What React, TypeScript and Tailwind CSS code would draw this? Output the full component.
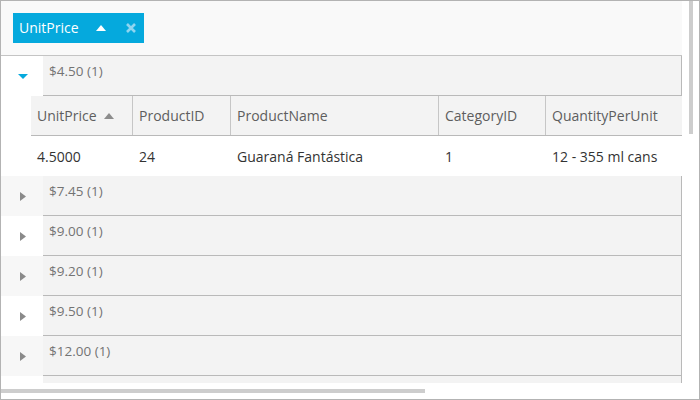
import React from "react";

const cols = [
  { w: "w-[102px]", label: "UnitPrice", sort: true, val: "4.5000" },
  { w: "w-[98px]", label: "ProductID", val: "24" },
  { w: "w-[208px]", label: "ProductName", val: "Guaraná Fantástica" },
  { w: "w-[107px]", label: "CategoryID", val: "1" },
  { w: "w-[160px]", label: "QuantityPerUnit", val: "12 - 355 ml cans" },
];

const groups = ["$7.45 (1)", "$9.00 (1)", "$9.20 (1)", "$9.50 (1)", "$12.00 (1)", ""];

function RightArrow() {
  return (
    <svg width="6" height="9" viewBox="0 0 6 9" className="block">
      <path d="M0 0 L6 4.5 L0 9 Z" fill="#8a8a8a" />
    </svg>
  );
}

function DownArrow({ color }: { color: string }) {
  return (
    <svg width="10" height="5" viewBox="0 0 10 5" className="block">
      <path d="M0 0 L10 0 L5 5 Z" fill={color} />
    </svg>
  );
}

function UpArrow({ color }: { color: string }) {
  return (
    <svg width="10" height="6" viewBox="0 0 10 6" className="block">
      <path d="M0 6 L10 6 L5 0 Z" fill={color} />
    </svg>
  );
}

export default function App() {
  return (
    <div
      className="w-[700px] h-[400px] border border-[#b3b3b3] bg-white flex overflow-hidden"
      style={{ fontFamily: '"Open Sans", "Noto Sans", sans-serif' }}
    >
      <div className="w-[681px] flex flex-col shrink-0">
        {/* grouping panel */}
        <div className="h-[55px] shrink-0 bg-[#f9f9f9] border-b border-[#c4c4c4] pt-[12px] pl-[12px]">
          <div className="w-[131px] h-[30px] bg-[#05a9dd] flex items-center text-white text-[14px]">
            <span className="ml-[6px] leading-none">UnitPrice</span>
            <span className="ml-[17px]">
              <UpArrow color="#ffffff" />
            </span>
            <span className="ml-[20px]">
              <svg width="10" height="10" viewBox="0 0 10 10" className="block">
                <path d="M1 1 L9 9 M9 1 L1 9" stroke="#8fd5f0" strokeWidth="2.6" />
              </svg>
            </span>
          </div>
        </div>
        {/* body */}
        <div className="h-[327px] shrink-0 overflow-hidden">
          {/* group 1 expanded */}
          <div className="flex h-[40px]">
            <div className="w-[42px] shrink-0 bg-white flex items-center justify-center pl-[2px]">
              <DownArrow color="#05a9dd" />
            </div>
            <div className="flex-1 bg-[#f3f3f3] border-b border-r border-[#b9b9b9] pl-[6px] pt-[6px] text-[13.5px] leading-[18px] text-[#737373]">
              $4.50 (1)
            </div>
          </div>
          {/* column header */}
          <div className="flex h-[40px] overflow-hidden">
            <div className="w-[30px] shrink-0 bg-white" />
            <div className="flex flex-1 bg-[#f3f3f3] border-b border-[#b9b9b9] overflow-hidden">
              {cols.map((c, i) => (
                <div
                  key={c.label}
                  className={`${c.w} shrink-0 h-full flex items-center pl-[6px] text-[14px] text-[#5e5e5e] ${
                    i < cols.length - 1 ? "border-r border-[#c6c6c6]" : ""
                  }`}
                >
                  <span>{c.label}</span>
                  {c.sort && (
                    <span className="ml-[7px]">
                      <UpArrow color="#8c8c8c" />
                    </span>
                  )}
                </div>
              ))}
            </div>
          </div>
          {/* data row */}
          <div className="flex h-[40px] overflow-hidden bg-white">
            <div className="w-[30px] shrink-0" />
            {cols.map((c, i) => (
              <div
                key={c.label}
                className={`${c.w} shrink-0 h-full flex items-center pl-[6px] text-[14px] text-[#333333] ${
                  i < cols.length - 1 ? "border-r border-transparent" : ""
                }`}
              >
                {c.val}
              </div>
            ))}
          </div>
          {/* other groups */}
          {groups.map((g, i) => (
            <div key={i} className="flex h-[40px]">
              <div
                className={`w-[42px] shrink-0 flex items-center justify-center pl-[2px] ${
                  i % 2 === 0 ? "bg-[#f7f7f7]" : "bg-white"
                }`}
              >
                {g && <RightArrow />}
              </div>
              <div className="flex-1 bg-[#f3f3f3] border-b border-r border-[#b9b9b9] pl-[6px] pt-[6px] text-[13.5px] leading-[18px] text-[#737373]">
                {g}
              </div>
            </div>
          ))}
        </div>
        {/* horizontal scrollbar */}
        <div className="flex-1 bg-white pt-[6px]">
          <div className="w-[424px] h-[4px] bg-[#cdcdcd]" />
        </div>
      </div>
      {/* vertical scrollbar */}
      <div className="flex-1 bg-white pl-[7px]">
        <div className="w-[4px] h-[133px] bg-[#cdcdcd]" />
      </div>
    </div>
  );
}
